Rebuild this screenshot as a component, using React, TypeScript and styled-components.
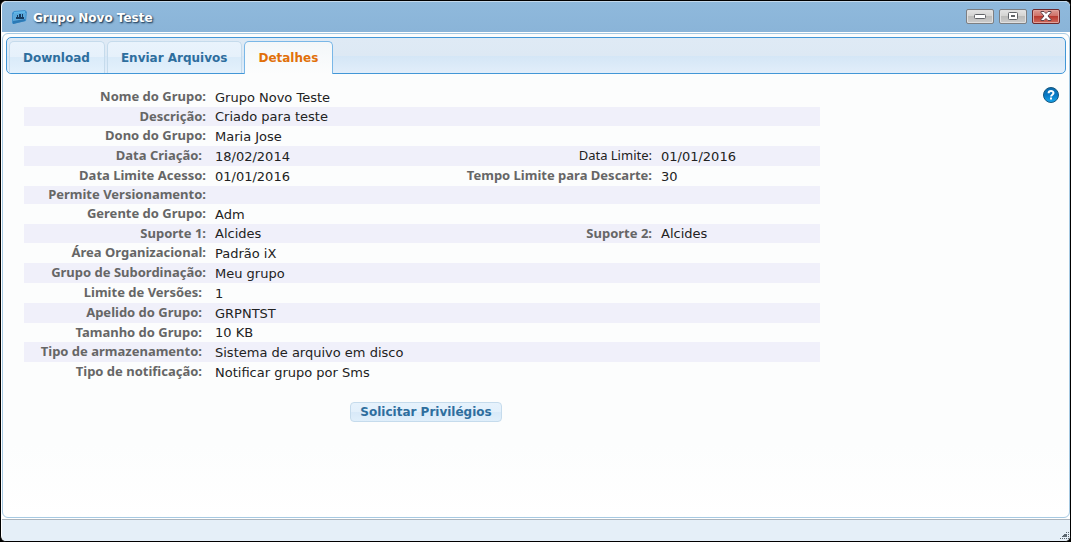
import React, { useState } from "react";
import styled, { createGlobalStyle } from "styled-components";

const GlobalStyle = createGlobalStyle`
  * { box-sizing: border-box; }
  body {
    margin: 0;
    background: #000;
    font-family: "DejaVu Sans", sans-serif;
    font-size: 13px;
    color: #222;
  }
`;

const Window = styled.main`
  display: flex;
  flex-direction: column;
  min-height: 100vh;
  border: 1px solid #000;
  border-radius: 6px;
  background: #fff;
  overflow: hidden;
`;

const TitleBar = styled.header`
  display: flex;
  align-items: center;
  gap: 5px;
  height: 31px;
  margin-left: 1px;
  padding: 0 10px 0 9px;
  border-top: 1px solid #c3d9ec;
  border-radius: 5px 5px 0 0;
  background: linear-gradient(#8fb9dc, #8ab4d8);
`;

const Title = styled.h1`
  flex: 1;
  margin: 0;
  padding-top: 2px;
  font-size: 12px;
  line-height: 20px;
  font-weight: 700;
  color: #fff;
  text-shadow: 1px 1px 2px #24425e, 1px 1px 1px #4a6e90;
`;

const WindowControls = styled.div`
  display: flex;
  gap: 5px;
  padding-bottom: 2px;
`;

const ControlButton = styled.button<{ $danger?: boolean }>`
  display: flex;
  align-items: center;
  justify-content: center;
  width: 28px;
  height: 15px;
  padding: 0;
  border: 1px solid ${(p) => (p.$danger ? "#6d2a2e" : "#7d7f82")};
  border-radius: 2px;
  background: ${(p) =>
    p.$danger
      ? "linear-gradient(#dc9a92 0%, #cf7168 45%, #b83a30 50%, #cf6a5c 100%)"
      : "linear-gradient(#e4e4e4 0%, #d4d4d2 45%, #bcbcba 50%, #cccccc 100%)"};
  box-shadow: inset 0 0 0 1px ${(p) => (p.$danger ? "#e0a29b" : "#e0e0e0")};
`;

const Panel = styled.section`
  flex: 1;
  margin: 1px 0 1px 1px;
  padding: 3px;
  border: 1px solid #a6c9e2;
  border-radius: 6px;
  background: linear-gradient(#fcfdfd 0%, #fcfdfd 85%, #fff 100%);
`;

const TabList = styled.div`
  display: flex;
  gap: 2px;
  height: 37px;
  padding: 3px 2px 0;
  border: 1px solid #4297d7;
  border-radius: 5px;
  background: linear-gradient(#dfeaf5 0%, #dde9f4 50%, #d4e6f6 51%, #e2eefa 100%);
`;

const Tab = styled.button<{ $active: boolean }>`
  height: ${(p) => (p.$active ? 33 : 32)}px;
  padding: 0 14px 0 13px;
  border: 1px solid ${(p) => (p.$active ? "#79b7e7" : "#c5dbec")};
  border-bottom: 0;
  border-radius: 5px 5px 0 0;
  background: ${(p) =>
    p.$active
      ? "linear-gradient(#f3f7f9, #fcfdfd)"
      : "linear-gradient(#e9f3fc 0%, #e6f1fb 48%, #daebf9 50%, #e4f1fc 100%)"};
  color: ${(p) => (p.$active ? "#e17009" : "#2e6e9e")};
  font: 700 12px/20px "DejaVu Sans", sans-serif;
`;

const Content = styled.div`
  display: flex;
  align-items: flex-start;
  justify-content: space-between;
  padding: 13px 7px 0 18px;
`;

const Details = styled.div`
  flex: 1;
  max-width: 796px;
`;

const DetailsTable = styled.table`
  width: 100%;
  border-collapse: collapse;
  table-layout: fixed;
`;

const Row = styled.tr<{ $height: number }>`
  height: ${(p) => p.$height}px;
  line-height: 17px;
  &:nth-child(even) {
    background: #f0f0fa;
  }
`;

const Label = styled.th<{ $inset?: boolean; $plain?: boolean }>`
  padding: 0 ${(p) => (p.$inset ? 9 : 5)}px 1px 0;
  text-align: right;
  white-space: nowrap;
  font-family: "Noto Sans", sans-serif;
  font-weight: ${(p) => (p.$plain ? 400 : 700)};
  color: ${(p) => (p.$plain ? "#222" : "#666")};
`;

const Value = styled.td`
  padding: 0 0 0 4px;
  white-space: nowrap;
`;

const Actions = styled.div`
  display: flex;
  justify-content: center;
  padding: 20px 0 0 8px;
`;

const ActionButton = styled.button`
  height: 20px;
  padding: 0 9px;
  border: 1px solid #c5dbec;
  border-radius: 4px;
  background: linear-gradient(#e6f2fc 0%, #e3f0fb 48%, #d8e9f8 50%, #e0effb 100%);
  color: #2e6e9e;
  font: 700 12px/18px "DejaVu Sans", sans-serif;
`;

const HelpButton = styled.button`
  display: flex;
  padding: 0;
  border: 0;
  background: none;
`;

const StatusBar = styled.footer`
  display: flex;
  align-items: flex-end;
  justify-content: flex-end;
  height: 22px;
  margin-left: 1px;
  padding: 0 1px 1px 0;
  border-top: 1px solid #aab4bd;
  background: #e5eff8;
`;

const GroupIcon = () => (
  <svg width="17" height="16" viewBox="0 0 17 16" aria-hidden="true">
    <path d="M1 4 3 2 14 1 16 3 15 12 2 15 1 14Z" fill="#3f91cd" />
    <path d="M3 3 14 2 14 4 3 5Z" fill="#62b8e8" />
    <path d="M2 5 15 4 14 11 2 14Z" fill="#5ba9dc" />
    <path d="M2 12 14 10 14 12 2 15Z" fill="#2c79b5" />
    <path d="M5 10V8h1V6h1v2h1V5h2v3h1V5h1v3h1v2Z" fill="#173c60" />
  </svg>
);

const MinimizeIcon = () => (
  <svg width="12" height="6" viewBox="0 0 12 6" aria-hidden="true">
    <rect x="0.5" y="1.5" width="11" height="4" rx="1" fill="#fff" stroke="#606367" />
  </svg>
);

const MaximizeIcon = () => (
  <svg width="12" height="9" viewBox="0 0 12 9" aria-hidden="true">
    <rect x="1.5" y="0.5" width="9" height="7" rx="1" fill="#fff" stroke="#606367" />
    <rect x="4.5" y="3.5" width="3" height="1" fill="#ccc" stroke="#606367" />
  </svg>
);

const CloseIcon = () => (
  <svg width="12" height="10" viewBox="0 0 12 10" aria-hidden="true">
    <path
      d="M1 .5H4L6 2.5 8 .5H11V1.5L8 5 11 8.5V9.5H8L6 7.5 4 9.5H1V8.5L4 5 1 1.5Z"
      fill="#fff"
      stroke="#60434a"
    />
  </svg>
);

const HelpIcon = () => (
  <svg width="16" height="16" viewBox="0 0 16 16" aria-hidden="true">
    <defs>
      <linearGradient id="help" x1="0" y1="0" x2="0" y2="1">
        <stop offset="0" stopColor="#0a6cad" />
        <stop offset="0.5" stopColor="#0878c4" />
        <stop offset="1" stopColor="#18a8ee" />
      </linearGradient>
    </defs>
    <circle cx="8" cy="8" r="7.5" fill="url(#help)" stroke="#17577f" />
    <path d="M5.6 6.2C5.6 3.3 10.5 3.4 10.5 6.1 10.5 7.8 8.1 7.7 8.1 9.6" fill="none" stroke="#fff" strokeWidth="2" />
    <rect x="7" y="10.5" width="2" height="2" fill="#fff" />
  </svg>
);

const ResizeGrip = () => (
  <svg width="9" height="9" viewBox="0 0 9 9" aria-hidden="true" shapeRendering="crispEdges">
    <path
      d="M6 1h1v1H6zM8 1h1v1H8zM4 3h3v1H4zM8 3h1v1H8zM3 4h4v1H3zM2 5h5v1H2zM8 5h1v1H8zM0 7h1v1H0zM2 7h1v1H2zM4 7h1v1H4zM6 7h1v1H6zM8 7h1v1H8z"
      fill="#5c6770"
    />
  </svg>
);

type Field = { label: string; value: string; inset?: boolean; plain?: boolean };
type DetailRow = { height?: number; fields: Field[] };

const rows: DetailRow[] = [
  { fields: [{ label: "Nome do Grupo:", value: "Grupo Novo Teste" }] },
  { height: 19, fields: [{ label: "Descrição:", value: "Criado para teste" }] },
  { fields: [{ label: "Dono do Grupo:", value: "Maria Jose" }] },
  {
    fields: [
      { label: "Data Criação:", value: "18/02/2014", inset: true },
      { label: "Data Limite:", value: "01/01/2016", plain: true },
    ],
  },
  {
    fields: [
      { label: "Data Limite Acesso:", value: "01/01/2016" },
      { label: "Tempo Limite para Descarte:", value: "30" },
    ],
  },
  { height: 18, fields: [{ label: "Permite Versionamento:", value: "" }] },
  { fields: [{ label: "Gerente do Grupo:", value: "Adm" }] },
  {
    height: 19,
    fields: [
      { label: "Suporte 1:", value: "Alcides" },
      { label: "Suporte 2:", value: "Alcides" },
    ],
  },
  { fields: [{ label: "Área Organizacional:", value: "Padrão iX" }] },
  { fields: [{ label: "Grupo de Subordinação:", value: "Meu grupo" }] },
  { fields: [{ label: "Limite de Versões:", value: "1", inset: true }] },
  { fields: [{ label: "Apelido do Grupo:", value: "GRPNTST", inset: true }] },
  { height: 19, fields: [{ label: "Tamanho do Grupo:", value: "10 KB", inset: true }] },
  { fields: [{ label: "Tipo de armazenamento:", value: "Sistema de arquivo em disco", inset: true }] },
  { fields: [{ label: "Tipo de notificação:", value: "Notificar grupo por Sms", inset: true }] },
];

const tabs = ["Download", "Enviar Arquivos", "Detalhes"];

export default function App() {
  const [active, setActive] = useState("Detalhes");
  return (
    <>
      <GlobalStyle />
      <Window>
        <TitleBar>
          <GroupIcon />
          <Title>Grupo Novo Teste</Title>
          <WindowControls>
            <ControlButton aria-label="Minimizar"><MinimizeIcon /></ControlButton>
            <ControlButton aria-label="Maximizar"><MaximizeIcon /></ControlButton>
            <ControlButton aria-label="Fechar" $danger><CloseIcon /></ControlButton>
          </WindowControls>
        </TitleBar>
        <Panel>
          <TabList role="tablist">
            {tabs.map((tab) => (
              <Tab
                key={tab}
                role="tab"
                aria-selected={tab === active}
                $active={tab === active}
                onClick={() => setActive(tab)}
              >
                {tab}
              </Tab>
            ))}
          </TabList>
          <Content>
            <Details>
              <DetailsTable>
                <colgroup>
                  <col width="187" />
                  <col />
                  <col width="200" />
                  <col width="163" />
                </colgroup>
                <tbody>
                  {rows.map(({ height = 20, fields }) => (
                    <Row key={fields[0].label} $height={height}>
                      {fields.map((f) => (
                        <React.Fragment key={f.label}>
                          <Label scope="row" $inset={f.inset} $plain={f.plain}>{f.label}</Label>
                          <Value>{f.value}</Value>
                        </React.Fragment>
                      ))}
                      {fields.length === 1 && <td colSpan={2} />}
                    </Row>
                  ))}
                </tbody>
              </DetailsTable>
              <Actions>
                <ActionButton>Solicitar Privilégios</ActionButton>
              </Actions>
            </Details>
            <HelpButton aria-label="Ajuda"><HelpIcon /></HelpButton>
          </Content>
        </Panel>
        <StatusBar><ResizeGrip /></StatusBar>
      </Window>
    </>
  );
}
